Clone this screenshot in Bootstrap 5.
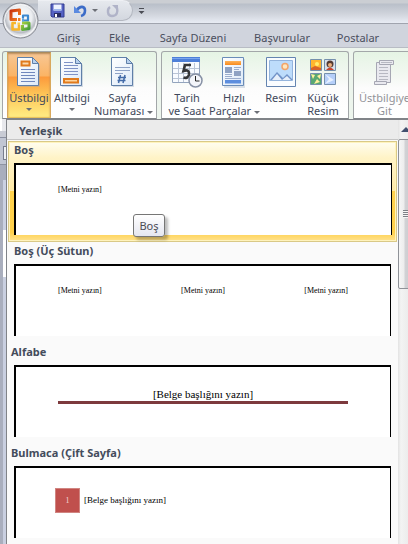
<!DOCTYPE html>
<html lang="tr">
<head>
<meta charset="utf-8">
<meta name="viewport" content="width=device-width, initial-scale=1">
<title>Üstbilgi galerisi</title>
<link href="https://cdn.jsdelivr.net/npm/bootstrap@5.3.0/dist/css/bootstrap.min.css" rel="stylesheet">
<style>
body{font-family:"Noto Sans","Open Sans",sans-serif;font-size:11px;line-height:13px;color:#444c5c;background:#fafafa}
button{font:inherit;color:inherit;background:none;border:0;padding:0}
svg{display:block;flex:none}
.titlebar{height:24px;background:linear-gradient(#cbced3 0,#cbced3 3px,#b9bfc9 4px,#d0d4dc 14px,#e8ecf4);border-bottom:1px solid #a0a4ae;padding-left:38px}
.quick{height:21px;width:95px;padding-left:12px;background:linear-gradient(#e6e9ee,#d3d7df);border:1px solid #b3b7c0;border-left:0;border-top-color:#eef0f4;border-radius:0 11px 11px 0}
.orb{left:2px;top:2px;z-index:3;border-radius:50%}
.tabs{height:24px;background:#d0d4dd;padding:4px 0 0 43px;line-height:16px;color:#4b4f5e;border-bottom:1px solid #b8bcc4}
.tabs a{color:inherit;flex:none}
.w-s{width:51px}.w-l{width:96px}.w-m{width:82px}.w-p{width:70px}
.ribbon{height:71px;padding:3px 0 0 2px;gap:4px;background:#edf5ed}
.grp{flex:none;padding:0 4px;border:1px solid #a3a7a9;border-bottom-color:#808488;border-radius:3px 3px 0 0;background:linear-gradient(#e5f4e4,#f3f8f2 24px,#fcfcfc 36px,#fff)}
.grp.last{padding-left:1px}
.tool{flex:none;width:42px;padding-top:4px;border:1px solid transparent;color:#3f485b}
.tool.t44{width:44px}.tool.t52{width:52px}.tool.t59{width:59px}
.tool.off{color:#929399}
.tool svg.pic{margin-bottom:3px}
.tool .lbl{white-space:nowrap;height:26px}
.tool.on{background:linear-gradient(#f7c795 0,#fbb465 23px,#fc9a3c 24px,#fdc255 40px,#ffe97f 62px);border-color:#a98b5d #d9a85c #e8c25c;box-shadow:inset 0 1px 2px #b98a58}
.arr{width:0;height:0;border:3px solid transparent;border-top-color:#6c6f76;border-bottom:0;display:inline-block}
.side{width:6px;flex:none;background:#a9aebd}
.s1{height:12px;background:#e8e9ed;border-left:2px solid #fff}
.s2{height:7px;background:#c8cbd4;border-bottom:1px solid #8b90a0}
.s3{height:27px;background:#c1c6d3;padding:8px 0 4px 3px;border-bottom:1px solid #8e93a2}
.s3 div{height:14px;background:#eef0f4;border:1px solid #777d8e;border-right:0}
.s4{flex:1;margin:15px 0 0 3px;background:linear-gradient(#cbd1e2 50px,#fff 50px,#fff 97px,#c9cfe0 97px)}
.gallery{border:1px solid #808388;border-right:0;border-bottom:0;background:#fafafa;min-width:0}
.ghead{height:20px;padding-left:12px;background:#ebebeb;border-bottom:1px solid #c5c5c5;font-size:11px;line-height:22px;margin:0}
.opt{display:block;text-align:left;height:101px;padding:0 6px 7px 6px;width:calc(100% - 2px);margin-left:1px}
.opt .ttl{display:block;font-weight:700;line-height:18px;height:22px}
.opt.alt .ttl{margin-left:-3px}
.opt.sel{margin-top:1px;padding:0 4px 6px 5px;border:1px solid #d9c987;box-shadow:inset 0 0 0 1px #fff3bd;background:linear-gradient(#fffdf0,#fff3c6 16px,#fff0bd 28px,#ffe9a5 49px,#ffd24d 49px,#ffd04b 90px,#ffe28e)}
.opt.sel .ttl{line-height:16px;height:21px}
.sheet{display:flex;align-items:flex-start;height:72px;background:#fff;border:solid #000;border-width:2px 1px 0 2px;color:#000;font-family:"Liberation Serif",serif;font-size:8px;line-height:10px;padding:20px 42px 0}
.title-line{font-size:11px;line-height:14px;border-bottom:3px solid #7d3a3d}
.sheet.board{padding-left:39px}
.num{width:25px;height:25px;line-height:23px;background:#c0504d;border:1px solid #d08581;color:#f3d6d5}
.cap{font-size:9px;line-height:25px}
.tip{left:124px;top:72px;width:32px;height:23px;line-height:22px;text-align:center;color:#4b4b55;background:linear-gradient(#fff,#e5e6f0);border:1px solid #767676;border-radius:3px;box-shadow:3px 3px 3px #0004}
.scroll{width:10px;flex:none;background:linear-gradient(90deg,#e3e3e3,#f3f3f3 3px,#ececec);overflow:hidden}
.up{height:19px;padding:7px 0 0 3px}
.thumb{height:150px;width:14px;border:1px solid #8f9298;border-radius:2px;background:linear-gradient(90deg,#f6f6f6,#ededed 5px,#d2d2d5 6px,#cacace)}
.grip{height:8px;width:8px;background:repeating-linear-gradient(#7c7f86 0,#7c7f86 1px,#f5f5f5 1px,#f5f5f5 2px)}
</style>
<script src="https://cdn.jsdelivr.net/npm/bootstrap@5.3.0/dist/js/bootstrap.bundle.min.js"></script>
</head>
<body class="vh-100 overflow-hidden d-flex flex-column position-relative">
<svg width="0" height="0" class="position-absolute" aria-hidden="true"><defs>
<linearGradient id="pg" x2="1" y2="1"><stop stop-color="#fff"/><stop offset="1" stop-color="#dce9f8"/></linearGradient>
<linearGradient id="or" y2="1" x2="0"><stop stop-color="#ffb35a"/><stop offset="1" stop-color="#f78a1d"/></linearGradient>
<linearGradient id="rd" x2="1" y2="1"><stop stop-color="#c9330f"/><stop offset="1" stop-color="#f5841f"/></linearGradient>
<linearGradient id="gr" x2="1" y2="1"><stop stop-color="#a5cf3c"/><stop offset="1" stop-color="#3f9a3c"/></linearGradient>
<radialGradient id="ob" cx=".5" cy=".4"><stop stop-color="#fff"/><stop offset=".65" stop-color="#eceef1"/><stop offset=".9" stop-color="#b9bcc3"/><stop offset="1" stop-color="#dfe1e5"/></radialGradient>
<g id="page"><path d="M2 2h15l6 6v22H2z" fill="#8ba0bb" opacity=".35"/><path d="M.5.5h15l6 6v22H.5z" fill="url(#pg)" stroke="#5f7fa8"/><path d="M15.500.5v6h6z" fill="#b7d0ee" stroke="#5f7fa8"/></g>
</defs></svg>

<button class="orb position-absolute" aria-label="Office Düğmesi">
<svg width="37" height="37" viewBox="0 0 37 37"><circle cx="18.500" cy="18.500" r="17.500" fill="url(#ob)" stroke="#84878f"/><circle cx="18.500" cy="18.500" r="16" fill="none" stroke="#fff" opacity=".8"/>
<g fill="none" stroke-linejoin="round"><path d="M15 17.500H9V9l8.500-1v5" stroke="url(#rd)" stroke-width="3"/><path d="M20 18.500h6v-5h-5v3" stroke="#3c88cf" stroke-width="2.200"/><path d="M14 21h-3.500v6.500H17V23" stroke="#f7b52a" stroke-width="2.600"/><path d="M20 21h7v5.500l-6.500 1V23" stroke="url(#gr)" stroke-width="3"/></g>
<path d="M16 16h2.500v3H16z" fill="#ef7a22"/><path d="M20 16.500h2v3h-2z" fill="#5aa3e0"/><path d="M15.500 20.500H18v2.500h-2.500z" fill="#fbc94a"/></svg>
</button>

<header class="titlebar d-flex align-items-start flex-shrink-0">
<div class="quick d-flex align-items-center">
<button aria-label="Kaydet"><svg width="15" height="15" viewBox="0 0 15 15"><path d="M1 1h13v13H2l-1-1z" fill="#5461c3" stroke="#333d91"/><path d="M3.500 1.500h8v6h-8z" fill="#eef3ff"/><path d="M3.500 6h8v1.500h-8z" fill="#9fb8ec"/><path d="M4 10h7v4H4z" fill="#272c63"/><path d="M5 11h2v3H5z" fill="#fff"/></svg></button>
<button class="ms-2" aria-label="Geri Al"><svg width="15" height="14" viewBox="0 0 15 14"><path d="M4 6C7 1.500 12 2 12 6.500c0 3-2 5-4 5.500" fill="none" stroke="#3c6cc8" stroke-width="2.600"/><path d="M1 2v7h7z" fill="#5b8ae0"/></svg></button>
<button class="ms-1 d-flex" aria-label="Geri al listesi"><i class="arr"></i></button>
<button class="ms-2" aria-label="Yinele"><svg width="14" height="14" viewBox="0 0 14 14"><path d="M4 3C1 5 1 12 6 12s6-4 5-8" fill="none" stroke="#b0b3c8" stroke-width="2.400"/><path d="M6 1h6v6z" fill="#b0b3c8"/></svg></button>
</div>
<button class="mt-1 px-1 d-flex" aria-label="Araç çubuğunu özelleştir"><svg width="9" height="12" viewBox="0 0 9 12"><path d="M2 4.500h5" stroke="#4b4d55"/><path d="M1.500 7h6l-3 3z" fill="#4b4d55"/></svg></button>
</header>

<nav class="tabs d-flex align-items-center text-center flex-shrink-0">
<a href="#" class="w-s text-decoration-none">Giriş</a><a href="#" class="w-s text-decoration-none">Ekle</a><a href="#" class="w-l text-decoration-none">Sayfa Düzeni</a><a href="#" class="w-m text-decoration-none">Başvurular</a><a href="#" class="w-p text-decoration-none">Postalar</a>
</nav>

<section class="ribbon d-flex flex-shrink-0">
<div class="grp d-flex">
<button class="tool t44 on"><svg class="pic mx-auto" width="24" height="31" viewBox="0 0 24 31"><use href="#page"/><path d="M4.500 4.500h8v4h-8z" fill="#fbd9ae" stroke="#e07a1c" stroke-width="2"/><path d="M4 12.500h14M4 15.500h14M4 18.500h14M4 21.500h14M4 24.500h14" stroke="#7088bd"/></svg><span class="lbl d-block">Üstbilgi<br><i class="arr align-top mt-1"></i></span></button>
<button class="tool"><svg class="pic mx-auto" width="24" height="31" viewBox="0 0 24 31"><use href="#page"/><path d="M4 5.500h9M4 8.500h14M4 11.500h14M4 14.500h14M4 17.500h14" stroke="#7f92c6"/><path d="M4 22h14v3.500H4z" fill="#ffd49b" stroke="#e07a1c" stroke-width="2"/></svg><span class="lbl d-block">Altbilgi<br><i class="arr align-top mt-1"></i></span></button>
<button class="tool t59"><svg class="pic mx-auto" width="24" height="31" viewBox="0 0 24 31"><use href="#page"/><path d="M4 10.500h15M4 13.500h15M4 16.500h8" stroke="#8ea2c6"/><path d="M9.500 18l-2 8M14 18l-2 8M7 20.500h8M6.500 23.500h8" stroke="#436ba8" stroke-width="1.500"/></svg><span class="lbl d-block">Sayfa<br>Numarası <i class="arr align-middle"></i></span></button>
</div>
<div class="grp d-flex">
<button class="tool"><svg class="pic mx-auto" width="33" height="31" viewBox="0 0 33 31"><path d="M1.500 1.500h27v24h-27z" fill="#f8fbff" stroke="#93a4bd"/><path d="M1 0h28v5H1z" fill="#4d7fd8"/><path d="M1 1h28v1H1z" fill="#7aa5ef"/><path d="M2 11.500h26M2 16.500h26M2 21.500h26M7.500 6v19M12.500 6v19M18.500 6v19M23.500 6v19" stroke="#bac5d6"/><path d="M20 8h-6l-1.500 6c4-1.500 6 0 5.500 3.500-.5 3-3 4-5.500 3" fill="none" stroke="#343538" stroke-width="2.600"/><circle cx="24.500" cy="23.500" r="6.500" fill="#f3f5fa" stroke="#8791a5" stroke-width="1.500"/><path d="M24.500 19v5h4" fill="none" stroke="#222"/></svg><span class="lbl d-block">Tarih<br>ve Saat</span></button>
<button class="tool t52"><svg class="pic mx-auto" width="24" height="31" viewBox="0 0 24 31"><path d="M2 2h21v29H2z" fill="#8ba0bb" opacity=".3"/><path d="M.5.5h21v28H.5z" fill="url(#pg)" stroke="#6a8cb8"/><path d="M3 4h16v4H3z" fill="url(#or)"/><path d="M3 10h7v6H3zM12 14h7v5h-7z" fill="#8fa2c3"/><path d="M12 10.500h7M12 12.500h5M3 17.500h7M3 19.500h7M3 21.500h16" stroke="#9badcd"/><path d="M3 23h16v3.500H3z" fill="#5d8ede"/></svg><span class="lbl d-block">Hızlı<br>Parçalar <i class="arr align-middle"></i></span></button>
<button class="tool"><svg class="pic mx-auto" width="31" height="31" viewBox="0 0 31 31"><path d="M.5.5h29v29H.5z" fill="#f9fcff" stroke="#6484b0"/><path d="M3.500 3.500h23v20h-23z" fill="#bddcfb" stroke="#94b4dc"/><circle cx="19" cy="9.500" r="3" fill="#ffe7be" stroke="#f2a56a" stroke-width="1.500"/><path d="M4 23l7-8 6 6 4-4 6 6z" fill="#7193c8"/><path d="M6 23l5-6 5 6 5-4 4 4z" fill="#e5eefa"/></svg><span class="lbl d-block">Resim</span></button>
<button class="tool"><svg class="pic mx-auto" width="28" height="31" viewBox="0 0 28 31"><g stroke="#7590ad"><path d="M1.500 2.500h11v11h-11z" fill="#ffb52e"/><path d="M15.500 2.500h11v11h-11z" fill="#d8e0ea"/><path d="M1.500 16.500h11v11h-11z" fill="#58a873"/><path d="M15.500 16.500h11v11h-11z" fill="#b5cff9"/></g><path d="M2 11l4-2 6 2v2H2z" fill="#d8632a"/><circle cx="8" cy="7" r="2" fill="#ffed72"/><circle cx="21" cy="7" r="3.500" fill="#553b32"/><circle cx="21" cy="8" r="2" fill="#edb07f"/><path d="M17 13q4-5 8 0z" fill="#c8432c"/><path d="M2 17l4 1-2 4zM12 17l-1 5-3-3zM5 27l3-5 3 3z" fill="#fff09e"/><path d="M16 17l9 6-9 4 4-5z" fill="#e6f0ff"/></svg><span class="lbl d-block">Küçük<br>Resim</span></button>
</div>
<div class="grp last d-flex">
<button class="tool t59 off" aria-disabled="true"><svg class="pic mx-auto" width="24" height="31" viewBox="0 0 24 31"><g fill="#e9e9ef" stroke="#a6a7b3"><path d="M3.500 5.500h14v20h-14z"/><path d="M6.500 3.500h14v4h-14z"/><path d="M1.500 24.500h12v3h-12z"/></g><path d="M6 10.500h9M6 13.500h9M6 16.500h9M6 19.500h9M6 22.500h9M8 5.500h11" stroke="#b7b8c2"/></svg><span class="lbl d-block">Üstbilgiye<br>Git</span></button>
</div>
</section>

<main class="d-flex flex-grow-1 overflow-hidden">
<aside class="side d-flex flex-column"><div class="s1"></div><div class="s2"></div><div class="s3"><div></div></div><div class="s4"></div></aside>
<div class="gallery d-flex flex-grow-1">
<div class="flex-grow-1 overflow-hidden">
<h2 class="ghead fw-bold">Yerleşik</h2>
<button class="opt sel position-relative"><span class="ttl">Boş</span><span class="sheet">[Metni yazın]</span><span class="tip position-absolute">Boş</span></button>
<button class="opt"><span class="ttl">Boş (Üç Sütun)</span><span class="sheet justify-content-between"><span>[Metni yazın]</span><span>[Metni yazın]</span><span>[Metni yazın]</span></span></button>
<button class="opt alt"><span class="ttl">Alfabe</span><span class="sheet"><span class="title-line w-100 text-center">[Belge başlığını yazın]</span></span></button>
<button class="opt alt"><span class="ttl">Bulmaca (Çift Sayfa)</span><span class="sheet board gap-1"><span class="num text-center">1</span><span class="cap">[Belge başlığını yazın]</span></span></button>
</div>
<div class="scroll"><div class="up"><svg width="10" height="5" viewBox="0 0 10 5"><path d="M0 5l5-5 5 5z" fill="#42506f"/></svg></div><div class="thumb d-flex align-items-center"><div class="grip ms-1"></div></div></div>
</div>
</main>
</body>
</html>
